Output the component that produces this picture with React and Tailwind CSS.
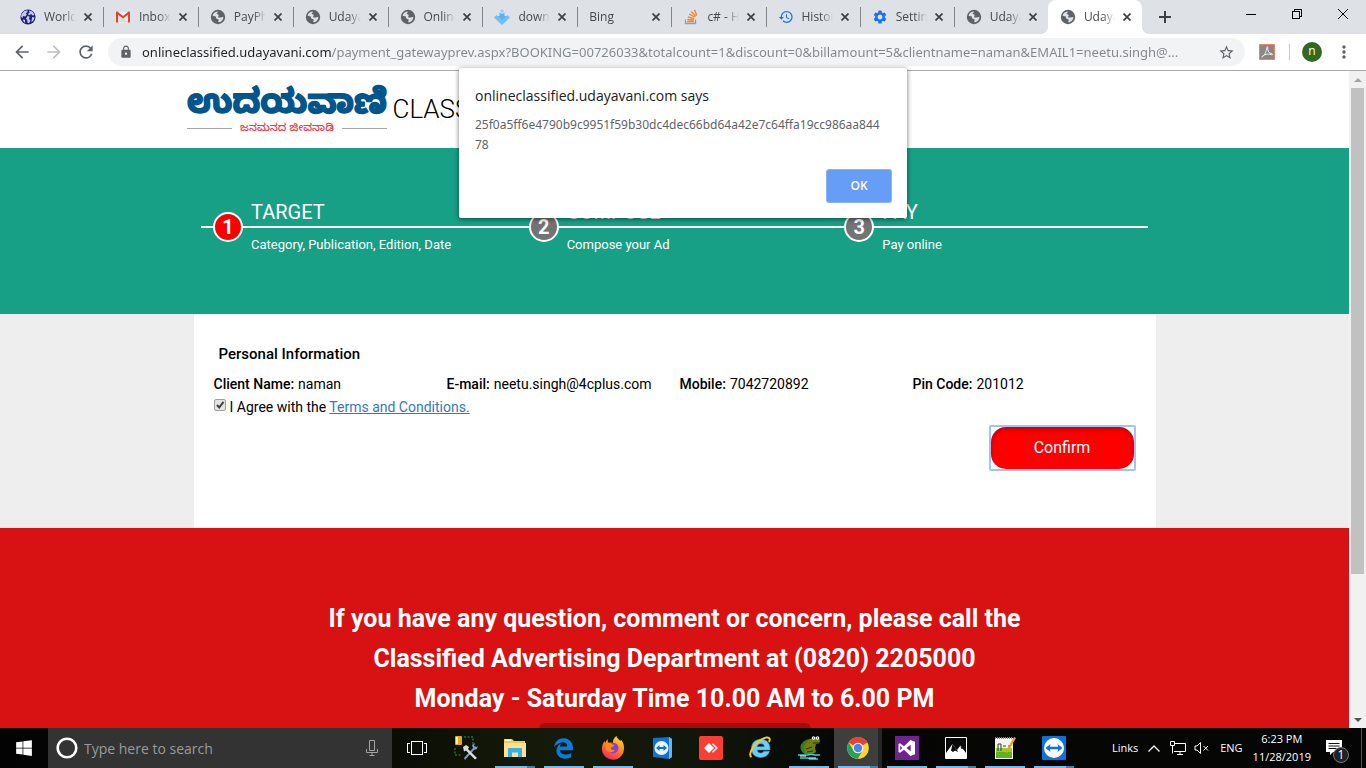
import React from "react";
import {
  MdHistory,
  MdSettings,
  MdLock,
  MdStarBorder,
  MdRefresh,
  MdArrowBack,
  MdArrowForward,
  MdMoreVert,
} from "react-icons/md";
import { FaWindows, FaEdgeLegacy, FaInternetExplorer } from "react-icons/fa";

/* ---------- Tab icons ---------- */

const PageIcon = () => (
  <svg viewBox="0 0 16 16" className="size-4 shrink-0">
    <circle cx="8" cy="8" r="7.200" fill="#5f6368" />
    <path
      d="M2.600 6.800C3.200 4.200 5 2.700 7.300 2.500c.9.200.8 1-.1 1.300-.9.300-.5 1.400.3 1.500 1.300.1 1.500 1 .8 1.900-.5.600-.1 1.300.8 1.300h1.700c1.200 0 1.600-.6 2.600-.7.100 2.500-1.600 4.800-4 5.500-1.300.2-1.400-.7-.9-1.600.5-.9 0-1.500-1-1.700-1.300-.2-1.600-1-1.600-1.900 0-.7-.6-1-1.300-.9z"
      fill="#dee1e6"
    />
  </svg>
);

const WorldIcon = () => (
  <svg viewBox="0 0 16 16" className="size-4 shrink-0">
    <circle cx="8" cy="8" r="7.600" fill="#20207c" />
    <path
      d="M1.500 5.200 4 2.200l3.400-1L7.500 3 5.800 4.200l1 1.600L5.200 7.400 3 7l-.6 2L1 8zM9 1.400l3.200 1.200 2.300 3-1.800 1.200-1-1.600-1.700.4-1.200 1L8 4.800l1.600-.8zM7.600 7l2 .6L9 10l1.500 1.500L9.200 14H7.600l-.4-3L6 9.600zM12 8l2.600.4-1.200 3.200-2 1.600.4-2.700zM3 10.200l2 .8.200 3-1.700-1.400z"
      fill="#c5c8ee"
    />
  </svg>
);

const GmailIcon = () => (
  <svg viewBox="0 0 16 16" className="size-4 shrink-0">
    <path d="M2 3h12v10.500H2z" fill="#f2f2f2" />
    <path d="M2.500 13 8 8l5.500 5z" fill="#dcdcdc" />
    <path d="M1 3.600C1 2.400 2.200 2.200 3 2.900l5 4 5-4c.8-.7 2-.5 2 .7v9.900h-2.100V5.700L8 9.600 3.100 5.700v7.800H1z" fill="#db4437" />
  </svg>
);

const DownloadIcon = () => (
  <svg viewBox="0 0 16 16" className="size-4 shrink-0">
    <path d="M8 0l2 2-2 2-2-2z" fill="#8ccdf8" />
    <path d="M5.500 3.500 8 5l2.500-1.500V7H13l-5 5-5-5h2.500z" fill="#57b4f3" />
    <path d="M0 8.500 2.500 6 8 11.500 13.500 6 16 8.500l-8 7.500z" fill="#6cc0f7" />
  </svg>
);

const StackIcon = () => (
  <svg viewBox="0 0 16 16" className="size-4 shrink-0" fill="none">
    <path d="M2.500 10.500v4h10v-4" stroke="#9a9ca0" strokeWidth="1.300" />
    <g stroke="#f48024" strokeWidth="1.300">
      <path d="M4.200 12.500h6.600M4.300 10.300l6.500.7M4.900 7.800l6.200 1.800M6.300 5l5.500 3.300M8.300 2.600l4.500 4.700M11.600.8l2.200 5.600" />
    </g>
  </svg>
);

const CrossIcon = () => (
  <svg viewBox="0 0 8 8" className="size-2" stroke="#3c4043" strokeWidth="1.700">
    <path d="M.5.500l7 7M7.500.500l-7 7" />
  </svg>
);

const TABS = [
  { title: "World", icon: <WorldIcon />, wide: true },
  { title: "Inbox (", icon: <GmailIcon />, wide: true },
  { title: "PayPho", icon: <PageIcon />, wide: true },
  { title: "Udayav", icon: <PageIcon />, wide: true },
  { title: "Online C", icon: <PageIcon />, wide: true },
  { title: "downlo", icon: <DownloadIcon />, wide: true },
  { title: "Bing" },
  { title: "c# - Ho", icon: <StackIcon /> },
  { title: "History", icon: <MdHistory className="size-4 shrink-0 text-[#1a73e8]" /> },
  { title: "Setting", icon: <MdSettings className="size-4 shrink-0 text-[#1a73e8]" /> },
  { title: "Udayav", icon: <PageIcon />, beforeActive: true },
  { title: "Udayav", icon: <PageIcon />, active: true },
];

function Tab({ title, icon, wide, active, beforeActive }) {
  return (
    <div
      className={
        "relative flex h-full min-w-0 items-center gap-2 pl-3 pr-[11px] " +
        (wide ? "flex-[95] " : "flex-[94] ") +
        (active ? "rounded-t-lg bg-white" : "")
      }
    >
      {icon}
      <span className="min-w-0 flex-1 overflow-hidden whitespace-nowrap text-xs text-[#45494d] [mask-image:linear-gradient(to_right,black_60%,transparent)]">
        {title}
      </span>
      <button type="button" aria-label="Close tab" className="shrink-0">
        <CrossIcon />
      </button>
      {!active && !beforeActive && <i className="absolute -right-px top-[7px] h-5 w-px bg-[#80868b]" />}
      {active && (
        <>
          <i className="absolute -left-2 bottom-0 size-2 bg-[radial-gradient(circle_at_0_0,transparent_8px,white_8px)]" />
          <i className="absolute -right-2 bottom-0 size-2 bg-[radial-gradient(circle_at_100%_0,transparent_8px,white_8px)]" />
        </>
      )}
    </div>
  );
}

function TabStrip() {
  return (
    <div className="flex h-[34px] shrink-0 items-center bg-[#dee1e6] pl-2">
      <div className="flex h-full min-w-0 max-w-[1134px] flex-1">
        {TABS.map((t, i) => (
          <Tab key={i} {...t} />
        ))}
      </div>
      <button type="button" aria-label="New tab" className="ml-[17px] mr-auto">
        <svg viewBox="0 0 12 12" className="size-3" stroke="#3c4043" strokeWidth="2" shapeRendering="crispEdges">
          <path d="M6 0v12M0 6h12" />
        </svg>
      </button>
      <div className="flex shrink-0 self-start">
        <button type="button" aria-label="Minimize" className="flex h-7 w-[46px] items-center justify-center">
          <svg viewBox="0 0 10 10" className="size-2.5" stroke="#000" shapeRendering="crispEdges">
            <path d="M0 5.500h10" />
          </svg>
        </button>
        <button type="button" aria-label="Restore" className="flex h-7 w-[46px] items-center justify-center">
          <svg viewBox="0 0 10 10" className="size-2.5" stroke="#000" fill="none" shapeRendering="crispEdges">
            <path d="M.5 2.500h7v7h-7zM2.500 2.500v-2h7v7h-2" />
          </svg>
        </button>
        <button type="button" aria-label="Close window" className="flex h-7 w-[46px] items-center justify-center">
          <svg viewBox="0 0 10 10" className="size-2.5" stroke="#000">
            <path d="M0 0l10 10M10 0 0 10" />
          </svg>
        </button>
      </div>
    </div>
  );
}

const URL_TEXT =
  "onlineclassified.udayavani.com/payment_gatewayprev.aspx?BOOKING=00726033&totalcount=1&discount=0&billamount=5&clientname=naman&EMAIL1=neetu.singh@...";

function Toolbar() {
  return (
    <div className="flex h-[37px] shrink-0 items-center border-b border-[#a9a9a9] bg-white pl-3">
      <div className="flex shrink-0 items-center gap-3">
        <button type="button" aria-label="Back">
          <MdArrowBack className="size-5 text-[#5f6368]" />
        </button>
        <button type="button" aria-label="Forward">
          <MdArrowForward className="size-5 text-[#bdbfc2]" />
        </button>
        <button type="button" aria-label="Reload">
          <MdRefresh className="size-5 text-[#5f6368]" />
        </button>
      </div>
      <div className="ml-3 flex h-7 min-w-0 flex-1 items-center rounded-full bg-[#f1f3f4] pr-2.5">
        <MdLock className="ml-[11px] size-3.5 shrink-0 text-[#5f6368]" />
        <input
          aria-label="Address"
          defaultValue={URL_TEXT}
          className="ml-[9px] min-w-0 flex-1 bg-[linear-gradient(to_right,#202124_190px,#80868b_190px)] bg-clip-text pt-px font-['Noto_Sans',sans-serif] text-[13px] text-transparent outline-none"
        />
        <button type="button" aria-label="Bookmark this page">
          <MdStarBorder className="size-[17px] text-[#5f6368]" />
        </button>
      </div>
      <div className="flex shrink-0 items-center pl-3.5">
        <button type="button" aria-label="PDF extension">
          <svg viewBox="0 0 16 16" className="size-4">
            <path d="M.5.500h15v15H.5z" fill="#8c8584" stroke="#f08070" />
            <path
              d="M3 13c1.800-.6 4.500-5 4.800-9.500.1-1.200 1.200-1 1 .2C8.300 7 10 9.500 13 9.800c.8.2.8 1.200-.2 1C9.500 9.500 6 10 3.500 12.200c-.8.600-1.200 1-.5.800z"
              fill="none"
              stroke="#f3eded"
            />
          </svg>
        </button>
        <i className="ml-3.5 h-4 w-px bg-[#c9cbce]" />
        <button
          type="button"
          aria-label="Profile"
          className="ml-3 flex size-5 items-center justify-center rounded-full bg-[#33691e] pb-0.5 text-xs text-white"
        >
          n
        </button>
        <button type="button" aria-label="Menu" className="ml-3 mr-3">
          <MdMoreVert className="size-5 text-[#5f6368]" />
        </button>
      </div>
    </div>
  );
}

/* ---------- Page ---------- */

function SiteLogo() {
  return (
    <svg viewBox="0 0 200 56" className="block h-14 w-[200px]">
      <text
        x="100"
        y="32"
        textAnchor="middle"
        fill="#02558b"
        stroke="#02558b"
        strokeWidth="1.500"
        strokeLinejoin="round"
        className="font-['Noto_Sans_Kannada','Noto_Sans',sans-serif] text-[34px] font-bold"
      >
        ಉದಯವಾಣಿ
      </text>
      <path d="M0 47.500h45M155 47.500h45" stroke="#a5a5a5" />
      <text
        x="100"
        y="50"
        textAnchor="middle"
        fill="#ef3b4c"
        className="font-['Noto_Sans_Kannada','Noto_Sans',sans-serif] text-[11px] font-medium"
      >
        ಜನಮನದ ಜೀವನಾಡಿ
      </text>
    </svg>
  );
}

function SiteHeader() {
  return (
    <header className="h-[77px] bg-white">
      <div className="mx-auto flex w-full max-w-[976px] items-center gap-1.5 pt-2.5">
        <a href="#home" aria-label="Udayavani home">
          <SiteLogo />
        </a>
        <span className="text-[26px] font-light text-black">CLASSIFIED</span>
      </div>
    </header>
  );
}

const STEPS = [
  { name: "TARGET", text: "Category, Publication, Edition, Date", current: true },
  { name: "COMPOSE", text: "Compose your Ad" },
  { name: "PAY", text: "Pay online" },
];

function Steps() {
  return (
    <section className="bg-[#18a086] pb-[59px] pt-[52px]">
      <ol className="mx-auto grid w-full max-w-[947px] grid-cols-3 text-white">
        {STEPS.map((s, i) => (
          <li key={s.name} className="relative">
            <h2 className="pl-[50px] text-xl leading-6">{s.name}</h2>
            <i className="mt-0.5 block h-0.5 bg-white" />
            <p className="mt-[7px] pl-[50px] text-[13px] leading-5">{s.text}</p>
            <span
              className={
                "absolute left-3 top-3 flex size-[30px] items-center justify-center rounded-full border-2 border-white text-xl font-bold " +
                (s.current ? "bg-[#fb0000]" : "bg-[#737373]")
              }
            >
              {i + 1}
            </span>
          </li>
        ))}
      </ol>
    </section>
  );
}

const DETAILS = [
  ["Client Name:", "naman"],
  ["E-mail:", "neetu.singh@4cplus.com"],
  ["Mobile:", "7042720892"],
  ["Pin Code:", "201012"],
];

function PersonalInformation() {
  return (
    <section className="bg-[#eeeeee]">
      <div className="mx-auto h-[214px] w-full max-w-[962px] bg-white pl-5 pr-2.5 pt-[30px] text-sm leading-5 text-black">
        <h3 className="pl-[5px] text-[15px] font-medium leading-5">Personal Information</h3>
        <dl className="mt-2.5 grid grid-cols-4">
          {DETAILS.map(([label, value]) => (
            <div key={label} className="flex gap-1">
              <dt className="font-medium">{label}</dt>
              <dd>{value}</dd>
            </div>
          ))}
        </dl>
        <div className="mt-[3px] flex items-center gap-1">
          <input
            id="agree"
            type="checkbox"
            defaultChecked
            className="mb-1 size-3 appearance-none rounded-xs border border-[#a0a0a0] bg-[#e4e4e4] checked:bg-[url('data:image/svg+xml,%3Csvg%20xmlns=%22http://www.w3.org/2000/svg%22%20viewBox=%220%200%2010%2010%22%3E%3Cpath%20d=%22M2%205l2.200%202.500L8.500%201.800%22%20fill=%22none%22%20stroke=%22%23404040%22%20stroke-width=%222%22/%3E%3C/svg%3E')]"
          />
          <label htmlFor="agree">
            I Agree with the{" "}
            <a href="#terms" className="text-[#337ab7] underline">
              Terms and Conditions.
            </a>
          </label>
        </div>
        <div className="mt-2 flex justify-end pr-2.5">
          <span className="rounded-xs border-2 border-[#a0c3ff]">
            <button
              type="button"
              className="block h-[42px] w-[143px] rounded-[15px] bg-[#ff0000] text-base text-white shadow-[inset_0_3px_5px_rgba(0,0,0,0.2)]"
            >
              Confirm
            </button>
          </span>
        </div>
      </div>
    </section>
  );
}

function ContactBanner() {
  return (
    <section className="bg-[#d81112] pt-[71px] text-center text-[25px] font-bold leading-10 text-white">
      <p>If you have any question, comment or concern, please call the</p>
      <p>Classified Advertising Department at (0820) 2205000</p>
      <p>Monday - Saturday Time 10.00 AM to 6.00 PM</p>
      <div className="mx-auto mt-1 h-12 w-[272px] rounded-md bg-[#a80b0e]" />
    </section>
  );
}

function Scrollbar() {
  return (
    <div className="flex w-[17px] shrink-0 flex-col items-center bg-[#f1f1f1]">
      <div className="flex h-[17px] items-center">
        <svg viewBox="0 0 8 4" className="h-1 w-2 fill-[#a3a3a3]">
          <path d="M4 0l4 4H0z" />
        </svg>
      </div>
      <div className="flex w-full flex-1 flex-col items-center">
        <div className="h-[78%] w-[13px] bg-[#c1c1c1]" />
      </div>
      <div className="flex h-[17px] items-center">
        <svg viewBox="0 0 8 4" className="h-1 w-2 fill-[#505050]">
          <path d="M0 0h8L4 4z" />
        </svg>
      </div>
    </div>
  );
}

function AlertDialog() {
  return (
    <div
      role="alertdialog"
      aria-labelledby="alert-title"
      aria-describedby="alert-text"
      className="absolute left-1/2 top-[68px] w-[448px] -translate-x-1/2 rounded-xs bg-white px-4 pb-4 pt-[18px] font-['Open_Sans',sans-serif] shadow-[0_1px_5px_rgba(0,0,0,0.55)]"
    >
      <h1 id="alert-title" className="text-sm leading-5 text-[#202124]">
        onlineclassified.udayavani.com says
      </h1>
      <p id="alert-text" className="mt-[9px] break-all pr-2 font-['Noto_Sans',sans-serif] text-xs leading-5 text-[#5f6368]">
        25f0a5ff6e4790b9c9951f59b30dc4dec66bd64a42e7c64ffa19cc986aa84478
      </p>
      <div className="mt-[15px] flex justify-end">
        <button
          type="button"
          className="h-8 w-16 rounded-xs bg-[#669df6] text-xs font-semibold text-white ring-1 ring-[#8ab4f8]"
        >
          OK
        </button>
      </div>
    </div>
  );
}

/* ---------- Taskbar icons ---------- */

const TaskViewIcon = () => (
  <svg viewBox="0 0 20 16" className="h-4 w-5" fill="none" stroke="#fff" shapeRendering="crispEdges">
    <path d="M4.500 1.500h11v13h-11zM3 3.500H.5v9H3M17 3.500h2.500v9H17" />
  </svg>
);

const ToolsIcon = () => (
  <svg viewBox="0 0 24 24" className="size-6">
    <rect x="1" y="0" width="7" height="9" rx="1" fill="#e8a820" />
    <path d="M2 1h2v7H2z" fill="#fff1b0" />
    <path d="M10 1h9v8M1 12v7h7" fill="none" stroke="#2f9a3a" strokeDasharray="2 1.500" />
    <path d="M10 22 19 12l-1-3 3-2-1 3 3 1 1-2-1 4-3 1-9 10z" fill="#7d9bc4" />
    <path d="M9 11l3-2 3 2-1 2 9 9-2 1.500-9-9-2 1z" fill="#d7dbe2" />
  </svg>
);

const ExplorerIcon = () => (
  <svg viewBox="0 0 24 24" className="size-6">
    <path d="M1 3h8l2 2h11v16H1z" fill="#f5c84b" />
    <path d="M1 7h22v14H1z" fill="#fde391" />
    <path d="M2 3.500h6V5H2z" fill="#fff6cf" />
    <path d="M5 21v-8q0-1 1-1h12q1 0 1 1v8h-4v-4.500H9V21z" fill="#36b0ea" />
  </svg>
);

const FirefoxIcon = () => (
  <svg viewBox="0 0 24 24" className="size-6">
    <defs>
      <linearGradient id="ff" x1=".8" y1="0" x2=".3" y2="1">
        <stop offset="0" stopColor="#ffe226" />
        <stop offset=".45" stopColor="#ff8a1c" />
        <stop offset="1" stopColor="#f5245f" />
      </linearGradient>
    </defs>
    <path
      d="M15.500 0c.3 2 2.200 3.300 3.800 5L20 3.800c2 2 3 5 3 8.200a11 11 0 0 1-22 1.500C.8 10 2 6.800 3.600 5l.4 2 2.500-4 .5 3.500 5 .2C11.800 4 13 1.500 15.500 0z"
      fill="url(#ff)"
    />
    <circle cx="12.300" cy="12" r="5.200" fill="#8a3be2" />
    <path d="M5 8c2-1.500 4.500-1.200 6 .2 1.500.2 2.500.8 2.500 1.300-.8 1.500-3.500 1-3.500 2.700 0 1.500 2 2.300 4 1.500-1 2.800-6 3.500-8.500 0C4.500 12 4.300 10 5 8z" fill="#ff8a1c" />
  </svg>
);

const TeamViewerOldIcon = () => (
  <svg viewBox="0 0 24 24" className="size-6">
    <path d="M3 2 19 1l3 2v18l-3 2-16-2z" fill="#1170d8" />
    <path d="M19 1l3 2v18l-3 2z" fill="#63b8f5" />
    <circle cx="11.500" cy="12" r="7" fill="#e9f3fc" />
    <path d="M6 12l3.500-3v2h4V9l3.500 3-3.500 3v-2h-4v2z" fill="#1170d8" />
  </svg>
);

const AnyDeskIcon = () => (
  <svg viewBox="0 0 24 24" className="size-6">
    <rect width="24" height="24" rx="2" fill="#fb3d33" />
    <path d="M10 7l5 5-5 5-5-5z" fill="#fff" />
    <path d="M13.500 7.700 17.800 12l-4.300 4.300" fill="none" stroke="#fff" strokeWidth="1.600" />
  </svg>
);

const EdgeIcon = () => <FaEdgeLegacy className="size-[21px] text-[#0a7bdc]" />;

const IeIcon = () => (
  <svg viewBox="0 0 24 24" className="size-6">
    <path
      d="M22 14H9.200c.2 2 1.500 3 3.500 3 1.600 0 2.600-.6 3.100-1.700h5.700C20.400 19.300 17 21.500 12.700 21.500c-5.600 0-9.200-3.500-9.200-9 0-5.600 3.700-9.200 9.200-9.200 6 0 9.600 3.700 9.300 10.700zM9.200 10.700h7.100c-.2-1.900-1.400-3-3.500-3-2 0-3.300 1.100-3.600 3z"
      fill="#6fcdf5"
      stroke="#2e95d3"
      strokeWidth=".6"
    />
    <path d="M3.500 21C-1 18.500 7 4.500 18 1.600c4.500-.9 4 2.200 3 4.400" fill="none" stroke="#f6c62c" strokeWidth="2" />
  </svg>
);

const FrogIcon = () => (
  <svg viewBox="0 0 24 24" className="size-6">
    <path d="M1 19h10l3-1 4 1h5M3 22h8l2 1h8" stroke="#2bd3e6" strokeWidth="1.600" fill="none" />
    <path d="M3 20h6M12 22h7" stroke="#fff" />
    <path d="M4 9c2-4 6-6 10-6l2-2h6l1 4c0 2-2 3-4 3l-1 4 1 4-3 2H8c-4-2-5-6-4-9z" fill="#6f7d12" />
    <path d="M4 9c2-3 5-5 8-5-3 2-5 5-5 8 0 2 1 4 2 6-4-2-6-5-5-9z" fill="#2f7f1b" />
    <path d="M16 7h7M9 13l6-2M10 16l6-1" stroke="#2d3606" />
    <circle cx="16.500" cy="2" r="1.700" fill="#fff" />
    <circle cx="20.500" cy="2" r="1.700" fill="#fff" />
    <path d="M16 2h1M20 2h1" stroke="#000" />
  </svg>
);

const ChromeIcon = () => (
  <svg viewBox="0 0 24 24" className="size-6">
    <circle cx="12" cy="12" r="10.800" fill="#fdd23c" />
    <path d="M12 12 2.650 6.600A10.800 10.800 0 0 1 21.350 6.600z" fill="#e0453a" />
    <path d="M12 6.800h9.450A10.800 10.800 0 0 0 2.650 6.600z" fill="#e0453a" />
    <path d="M2.650 6.600A10.800 10.800 0 0 0 11.800 22.800L16.500 14.600 7.500 14.600z" fill="#25a35a" />
    <circle cx="12" cy="12" r="5.300" fill="#f4f4f4" />
    <circle cx="12" cy="12" r="4.200" fill="#4a85ee" />
  </svg>
);

const VisualStudioIcon = () => (
  <svg viewBox="0 0 24 24" className="size-6">
    <rect width="24" height="24" fill="#6f2391" />
    <path
      fillRule="evenodd"
      d="M15.500 4 20 5.800v12.400L15.500 20 9 13.700 5 16.800l-1.500-.8V8L5 7.200l4 3.100zM15.700 8.700 11.500 12l4.200 3.300zM5.200 9.800v4.400L7.300 12z"
      fill="#fff"
    />
  </svg>
);

const PhotosIcon = () => (
  <svg viewBox="0 0 24 24" className="size-6">
    <path d="M1.500 1.500h21v21h-21z" fill="#060606" stroke="#fff" />
    <path d="M2 17 8.500 8l4.500 6 3.500-4.500 5.500 7.500v5.500H2z" fill="#fff" />
    <path d="M8.500 8l4.500 6 1 2-3-1.500-2 1.500-2-1.500zM16.500 9.500l3 4-2.500-1z" fill="#0a0a0a" />
  </svg>
);

const NotepadIcon = () => (
  <svg viewBox="0 0 24 24" className="size-6">
    <path d="M2 2h18v21H2z" fill="#f4f4ee" />
    <path d="M3 12h16v10H3z" fill="#8fd32c" />
    <path d="M3 16h16v6H3z" fill="#5cb51c" />
    <path d="M2 2h18" stroke="#888" strokeWidth="2" strokeDasharray="1 1" />
    <path d="M5 15V8h3v7M10 10h3M15 10h3" stroke="#333" fill="none" />
    <path d="M21 1l2 1-8 14-2 1v-2z" fill="#f0a020" />
  </svg>
);

const TeamViewerIcon = () => (
  <svg viewBox="0 0 24 24" className="size-6">
    <rect width="24" height="24" rx="1" fill="#0d72de" />
    <circle cx="12" cy="12" r="10" fill="#fff" />
    <path d="M3.500 12 8.500 8l-.6 2.700h8.200L15.500 8l5 4-5 4 .6-2.700H7.900l.6 2.700z" fill="#0d72de" />
  </svg>
);

const APPS = [
  { name: "Task view", icon: <TaskViewIcon /> },
  { name: "Database tools", icon: <ToolsIcon /> },
  { name: "File Explorer", icon: <ExplorerIcon />, open: true, many: true },
  { name: "Microsoft Edge", icon: <EdgeIcon />, open: true },
  { name: "Firefox", icon: <FirefoxIcon />, open: true },
  { name: "TeamViewer QuickSupport", icon: <TeamViewerOldIcon /> },
  { name: "AnyDesk", icon: <AnyDeskIcon /> },
  { name: "Internet Explorer", icon: <IeIcon /> },
  { name: "Toad", icon: <FrogIcon />, open: true },
  { name: "Chrome", icon: <ChromeIcon />, open: true, many: true, focused: true },
  { name: "Visual Studio", icon: <VisualStudioIcon />, open: true },
  { name: "Photos", icon: <PhotosIcon />, open: true, many: true },
  { name: "Notepad++", icon: <NotepadIcon />, open: true },
  { name: "TeamViewer", icon: <TeamViewerIcon />, open: true, many: true },
];

function Taskbar() {
  return (
    <footer className="flex h-10 shrink-0 items-stretch bg-[linear-gradient(90deg,#030303_0%,#0a0c04_28%,#151b09_40%,#10150a_52%,#050604_62%,#050505_100%)] font-['Open_Sans',sans-serif] text-white">
      <button type="button" aria-label="Start" className="flex w-12 items-center justify-center">
        <FaWindows className="size-[18px]" />
      </button>
      <div className="flex w-[344px] items-center bg-[#333333] pl-2 pr-3">
        <svg viewBox="0 0 22 22" className="size-[22px]">
          <circle cx="11" cy="11" r="9.300" fill="none" stroke="#fff" strokeWidth="2.600" />
        </svg>
        <input
          aria-label="Search"
          placeholder="Type here to search"
          className="ml-1.5 min-w-0 flex-1 bg-transparent pt-0.5 text-sm outline-none placeholder:text-[#9a9a9a]"
        />
        <button type="button" aria-label="Voice search">
          <svg viewBox="0 0 16 18" className="h-[18px] w-4" fill="none" stroke="#a5a5a5">
            <path d="M5.500 1.500h5v10h-5zM2.500 10v3.500h11V10M8 13.500v3M5.500 16.500h5" />
          </svg>
        </button>
      </div>
      <nav className="flex shrink-0">
        {APPS.map((a) => (
          <button
            key={a.name}
            type="button"
            aria-label={a.name}
            className={
              "flex w-[49px] flex-col items-center " +
              (a.focused ? "bg-[linear-gradient(90deg,transparent_1px,#3e3e3e_1px,#3e3e3e_45px,#262626_45px)]" : "")
            }
          >
            <span className="flex w-full flex-1 items-center justify-center pt-0.5">{a.icon}</span>
            <span className="flex h-0.5 w-10">
              {a.open && <i className="flex-1 bg-[#76b9ed]" />}
              {a.many && <i className="w-2 bg-[#4c7ca3]" />}
            </span>
          </button>
        ))}
      </nav>
      <div className="ml-auto flex shrink-0 items-center text-[11px]">
        <span>Links</span>
        <svg viewBox="0 0 12 7" className="ml-2.5 h-[7px] w-3" fill="none" stroke="#fff" strokeWidth="1.300">
          <path d="M.5 6.500 6 1l5.500 5.500" />
        </svg>
        <svg viewBox="0 0 16 14" className="ml-2.5 h-3.5 w-4" fill="none" stroke="#fff">
          <path d="M5 2.500h10.500v8H4M.5.500h4v4h-4zM2.500 4.500v8M10 10.500v3M7 13.500h6" />
        </svg>
        <svg viewBox="0 0 16 14" className="ml-2 h-3.5 w-4" fill="none" stroke="#fff">
          <path d="M1 5h2l3.500-3.500v11L3 9H1zM9.500 5l4.500 4.500M14 5 9.500 9.500" />
        </svg>
        <span className="ml-2.5">ENG</span>
        <div className="ml-2.5 text-center leading-[18px]">
          <div>6:23 PM</div>
          <div>11/28/2019</div>
        </div>
        <button type="button" aria-label="Notifications" className="relative ml-3.5 mr-3 mt-1.5">
          <svg viewBox="0 0 24 24" className="size-6">
            <path d="M1 1h16v12H8l-3 3v-3H1z" fill="#fff" />
            <path d="M3.500 4.500h11M3.500 7h11M3.500 9.500h8" stroke="#111" />
            <circle cx="16" cy="16" r="7.500" fill="#222" stroke="#777" />
          </svg>
          <span className="absolute bottom-0 right-0 flex size-4 items-center justify-center text-xs">1</span>
        </button>
      </div>
      <i className="mr-1 w-px bg-[#555555]" />
    </footer>
  );
}

export default function App() {
  return (
    <div className="relative flex h-screen flex-col overflow-hidden bg-white font-['Roboto',sans-serif]">
      <div className="shrink-0 font-['Open_Sans',sans-serif]">
        <TabStrip />
        <Toolbar />
      </div>
      <div className="flex min-h-0 flex-1">
        <main className="min-w-0 flex-1 overflow-hidden">
          <SiteHeader />
          <Steps />
          <PersonalInformation />
          <ContactBanner />
        </main>
        <Scrollbar />
      </div>
      <Taskbar />
      <AlertDialog />
    </div>
  );
}
